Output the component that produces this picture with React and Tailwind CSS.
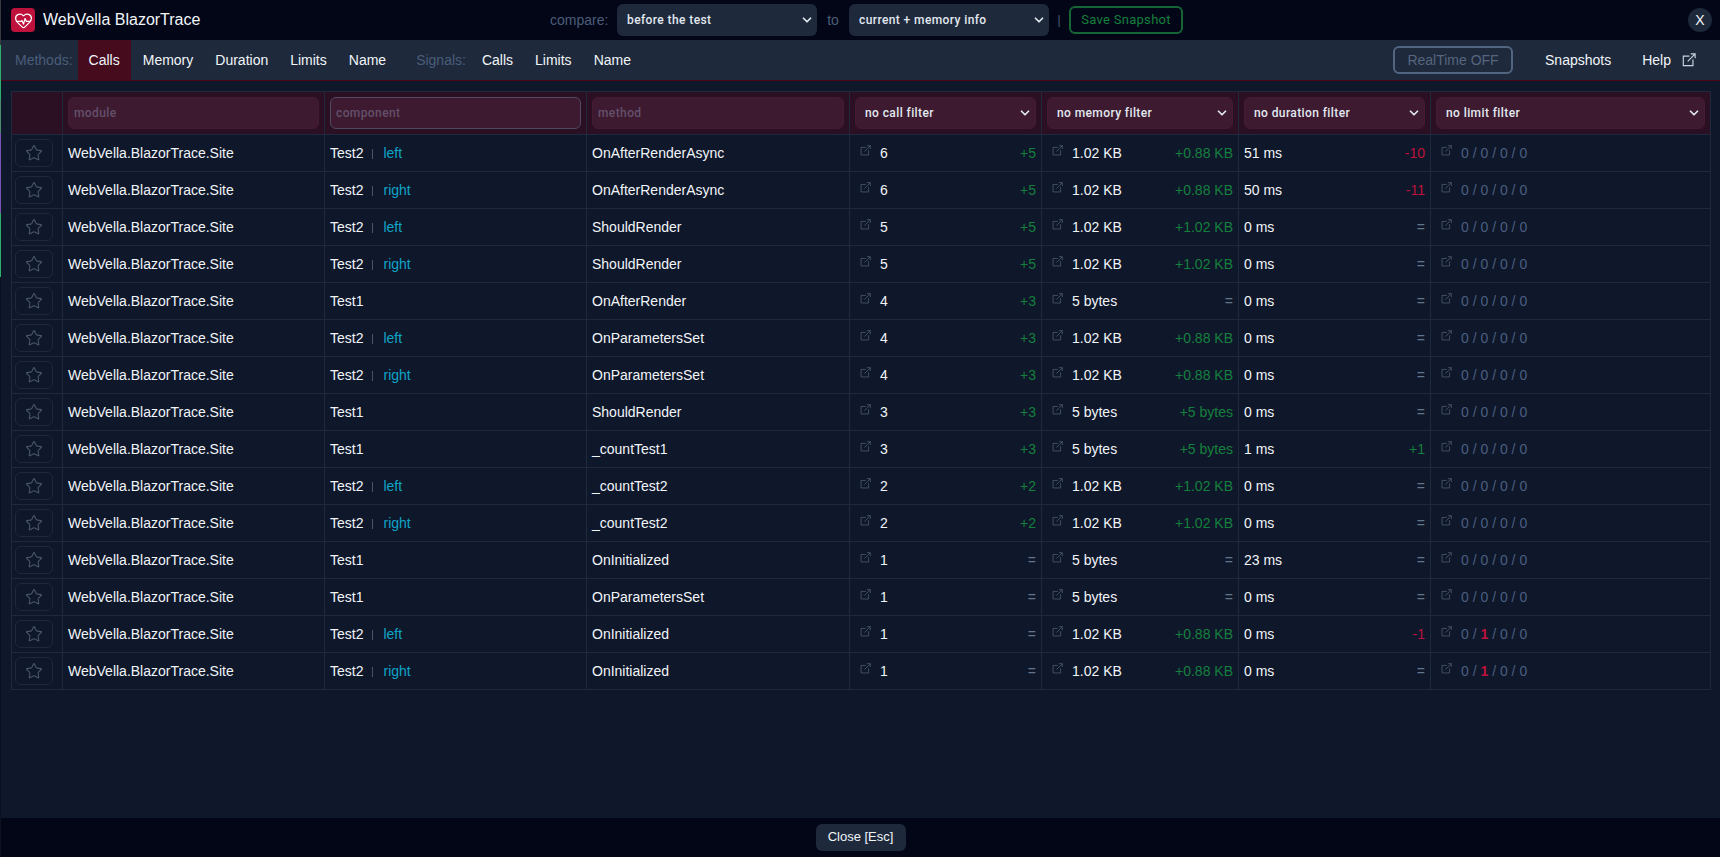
import React from "react";
import { HeartPulse, Star, ChevronDown } from "lucide-react";

const rows = [
  ["Test2", "left", "OnAfterRenderAsync", "6", "+5", "1.02 KB", "+0.88 KB", "51 ms", "-10", false],
  ["Test2", "right", "OnAfterRenderAsync", "6", "+5", "1.02 KB", "+0.88 KB", "50 ms", "-11", false],
  ["Test2", "left", "ShouldRender", "5", "+5", "1.02 KB", "+1.02 KB", "0 ms", "=", false],
  ["Test2", "right", "ShouldRender", "5", "+5", "1.02 KB", "+1.02 KB", "0 ms", "=", false],
  ["Test1", "", "OnAfterRender", "4", "+3", "5 bytes", "=", "0 ms", "=", false],
  ["Test2", "left", "OnParametersSet", "4", "+3", "1.02 KB", "+0.88 KB", "0 ms", "=", false],
  ["Test2", "right", "OnParametersSet", "4", "+3", "1.02 KB", "+0.88 KB", "0 ms", "=", false],
  ["Test1", "", "ShouldRender", "3", "+3", "5 bytes", "+5 bytes", "0 ms", "=", false],
  ["Test1", "", "_countTest1", "3", "+3", "5 bytes", "+5 bytes", "1 ms", "+1", false],
  ["Test2", "left", "_countTest2", "2", "+2", "1.02 KB", "+1.02 KB", "0 ms", "=", false],
  ["Test2", "right", "_countTest2", "2", "+2", "1.02 KB", "+1.02 KB", "0 ms", "=", false],
  ["Test1", "", "OnInitialized", "1", "=", "5 bytes", "=", "23 ms", "=", false],
  ["Test1", "", "OnParametersSet", "1", "=", "5 bytes", "=", "0 ms", "=", false],
  ["Test2", "left", "OnInitialized", "1", "=", "1.02 KB", "+0.88 KB", "0 ms", "-1", true],
  ["Test2", "right", "OnInitialized", "1", "=", "1.02 KB", "+0.88 KB", "0 ms", "=", true],
];

function BoxArrow({ className }) {
  return (
    <svg viewBox="0 0 16 16" fill="none" stroke="currentColor" strokeWidth="1.3" className={className}>
      <path d="M8.5 3.5H1.5V14.5H12.5V7.5" />
      <path d="M6.5 9.5L15 1M10 1H15V6" />
    </svg>
  );
}

function Delta({ value }) {
  const color =
    value === "=" ? "text-[#64748b]" : value[0] === "-" ? "text-[#be123c]" : "text-[#15803d]";
  return <span className={`ml-auto ${color}`}>{value}</span>;
}

function Select({ label, className }) {
  return (
    <div className={`flex items-center justify-between rounded-md font-['Roboto',sans-serif] text-xs font-medium tracking-[0.4px] text-[#e2e8f0] ${className}`}>
      <span>{label}</span>
      <ChevronDown size={14} strokeWidth={3} className="text-[#e2e8f0]" />
    </div>
  );
}

function FilterInput({ placeholder, className = "border-[#451a32]" }) {
  return (
    <input
      readOnly
      placeholder={placeholder}
      className={`h-8 w-full rounded-md border bg-[#3d1a30] px-[5px] font-['Roboto',sans-serif] text-xs font-medium tracking-[0.4px] outline-none placeholder:text-[#64506b] ${className}`}
    />
  );
}

function NavItem({ children, active }) {
  return (
    <div className={`flex h-full items-center px-[11px] text-[#f1f5f9] ${active ? "mr-px bg-[#470b1e]" : ""}`}>
      {children}
    </div>
  );
}

export default function App() {
  return (
    <div className="flex h-[857px] overflow-hidden bg-[#0f172a] font-['Liberation_Sans',Arial,sans-serif] text-sm text-[#f1f5f9]">
      {/* 1px strip of the page behind the panel, visible on the left edge */}
      <div className="flex w-px shrink-0 flex-col bg-[#0b1120]">
        <div className="h-[45px] bg-[#3a3a3e]" />
        <div className="h-[55px] bg-[#2fae6e]" />
        <div className="h-[33px] bg-[#4d8a70]" />
        <div className="h-[80px] bg-[#7a52b3]" />
        <div className="h-[64px] bg-[#2fae6e]" />
      </div>

      <div className="flex min-w-0 flex-1 flex-col">
        <header className="flex h-10 shrink-0 items-center bg-[#020617] pl-[10px] pr-[8px]">
          <div className="flex w-[539px] shrink-0 items-center gap-[8px]">
            <div className="flex h-6 w-6 items-center justify-center rounded-[4px] bg-[#be123c]">
              <HeartPulse size={19} strokeWidth={1.6} className="text-white" />
            </div>
            <span className="text-base text-[#f1f5f9]">WebVella BlazorTrace</span>
          </div>
          <span className="w-[67px] text-[#4a5d7a]">compare:</span>
          <Select label="before the test" className="h-8 w-[200px] bg-[#1e293b] pl-[10px] pr-[3px]" />
          <span className="w-[32px] text-center text-[#4a5d7a]">to</span>
          <Select label="current + memory info" className="h-8 w-[200px] bg-[#1e293b] pl-[10px] pr-[3px]" />
          <span className="w-[20px] text-center text-xs text-[#4a5d7a]">|</span>
          <div className="flex h-7 w-[114px] items-center justify-center rounded-md border-2 border-[#166534] font-['Roboto',sans-serif] text-[13px] tracking-[0.3px] text-[#15803d]">
            Save Snapshot
          </div>
          <div className="ml-auto flex h-6 w-6 items-center justify-center rounded-full bg-[#1e293b] text-sm text-[#f1f5f9]">
            X
          </div>
        </header>

        <nav className="flex h-[41px] shrink-0 items-stretch border-b border-b-[#4c0519] bg-[#1e293b] pl-[14px] pr-[24px]">
          <span className="mr-[5px] flex items-center text-[#4a5d7a]">Methods:</span>
          <NavItem active>Calls</NavItem>
          <NavItem>Memory</NavItem>
          <NavItem>Duration</NavItem>
          <NavItem>Limits</NavItem>
          <NavItem>Name</NavItem>
          <span className="ml-[19px] mr-[5px] flex items-center text-[#4a5d7a]">Signals:</span>
          <NavItem>Calls</NavItem>
          <NavItem>Limits</NavItem>
          <NavItem>Name</NavItem>
          <div className="ml-auto flex items-center">
            <div className="flex h-7 w-[120px] items-center justify-center rounded-md border-2 border-[#526580] text-[#56667f]">
              RealTime OFF
            </div>
            <span className="ml-[32px]">Snapshots</span>
            <span className="ml-[31px]">Help</span>
            <BoxArrow className="ml-[11px] h-[14px] w-[14px] text-[#cbd5e1]" />
          </div>
        </nav>

        <main className="flex-1 pl-[10px] pr-[9px] pt-[10px]">
          <table className="w-[1699px] table-fixed border-collapse border border-[#1e293b]">
            <colgroup>
              <col className="w-[51px]" />
              <col className="w-[262px]" />
              <col className="w-[262px]" />
              <col className="w-[263px]" />
              <col className="w-[192px]" />
              <col className="w-[197px]" />
              <col className="w-[192px]" />
              <col className="w-[280px]" />
            </colgroup>
            <thead>
              <tr className="h-[43px] bg-[#2b1023]">
                <th className="border border-[#1e293b]" />
                <th className="border border-[#1e293b] px-[5px]"><FilterInput placeholder="module" /></th>
                <th className="border border-[#1e293b] px-[5px]"><FilterInput placeholder="component" className="border-[#4d4a62]" /></th>
                <th className="border border-[#1e293b] px-[5px]"><FilterInput placeholder="method" /></th>
                <th className="border border-[#1e293b] px-[5px] text-left"><Select label="no call filter" className="h-8 border border-[#451a32] bg-[#3d1a30] pl-[9px] pr-[3px]" /></th>
                <th className="border border-[#1e293b] px-[5px] text-left"><Select label="no memory filter" className="h-8 border border-[#451a32] bg-[#3d1a30] pl-[9px] pr-[3px]" /></th>
                <th className="border border-[#1e293b] px-[5px] text-left"><Select label="no duration filter" className="h-8 border border-[#451a32] bg-[#3d1a30] pl-[9px] pr-[3px]" /></th>
                <th className="border border-[#1e293b] px-[5px] text-left"><Select label="no limit filter" className="h-8 border border-[#451a32] bg-[#3d1a30] pl-[9px] pr-[3px]" /></th>
              </tr>
            </thead>
            <tbody>
              {rows.map((r, i) => (
                <tr key={i} className="h-[37px]">
                  <td className="border border-[#1e293b] px-[3px]">
                    <div className="flex h-[28px] w-[38px] items-center justify-center rounded-md border border-[#1e293b]">
                      <Star size={18} strokeWidth={1.5} className="text-[#475569]" />
                    </div>
                  </td>
                  <td className="border border-[#1e293b] px-[5px]">WebVella.BlazorTrace.Site</td>
                  <td className="border border-[#1e293b] px-[5px]">
                    {r[0]}
                    {r[1] && (
                      <>
                        <span className="ml-[9px] mr-[10px] inline-block h-[10px] w-px bg-[#475569] align-[-1px]" />
                        <span className="text-[#0ea5c9]">{r[1]}</span>
                      </>
                    )}
                  </td>
                  <td className="border border-[#1e293b] px-[5px]">{r[2]}</td>
                  <td className="border border-[#1e293b] px-[5px]">
                    <div className="flex items-center">
                      <BoxArrow className="mb-[6px] ml-[5px] mr-[9px] h-[11px] w-[11px] text-[#475569]" />
                      <span>{r[3]}</span>
                      <Delta value={r[4]} />
                    </div>
                  </td>
                  <td className="border border-[#1e293b] px-[5px]">
                    <div className="flex items-center">
                      <BoxArrow className="mb-[6px] ml-[5px] mr-[9px] h-[11px] w-[11px] text-[#475569]" />
                      <span>{r[5]}</span>
                      <Delta value={r[6]} />
                    </div>
                  </td>
                  <td className="border border-[#1e293b] px-[5px]">
                    <div className="flex items-center">
                      <span>{r[7]}</span>
                      <Delta value={r[8]} />
                    </div>
                  </td>
                  <td className="border border-[#1e293b] px-[5px]">
                    <div className="flex items-center text-[#4a5f80]">
                      <BoxArrow className="mb-[6px] ml-[5px] mr-[9px] h-[11px] w-[11px] text-[#475569]" />
                      <span>
                        0 / {r[9] ? <b className="text-[#be123c]">1</b> : "0"} / 0 / 0
                      </span>
                    </div>
                  </td>
                </tr>
              ))}
            </tbody>
          </table>
        </main>

        <footer className="flex h-[39px] shrink-0 items-center justify-center bg-[#020617]">
          <div className="flex h-[27px] w-[90px] items-center justify-center rounded-md bg-[#1e293b] text-[13px]">
            Close [Esc]
          </div>
        </footer>
      </div>
    </div>
  );
}
